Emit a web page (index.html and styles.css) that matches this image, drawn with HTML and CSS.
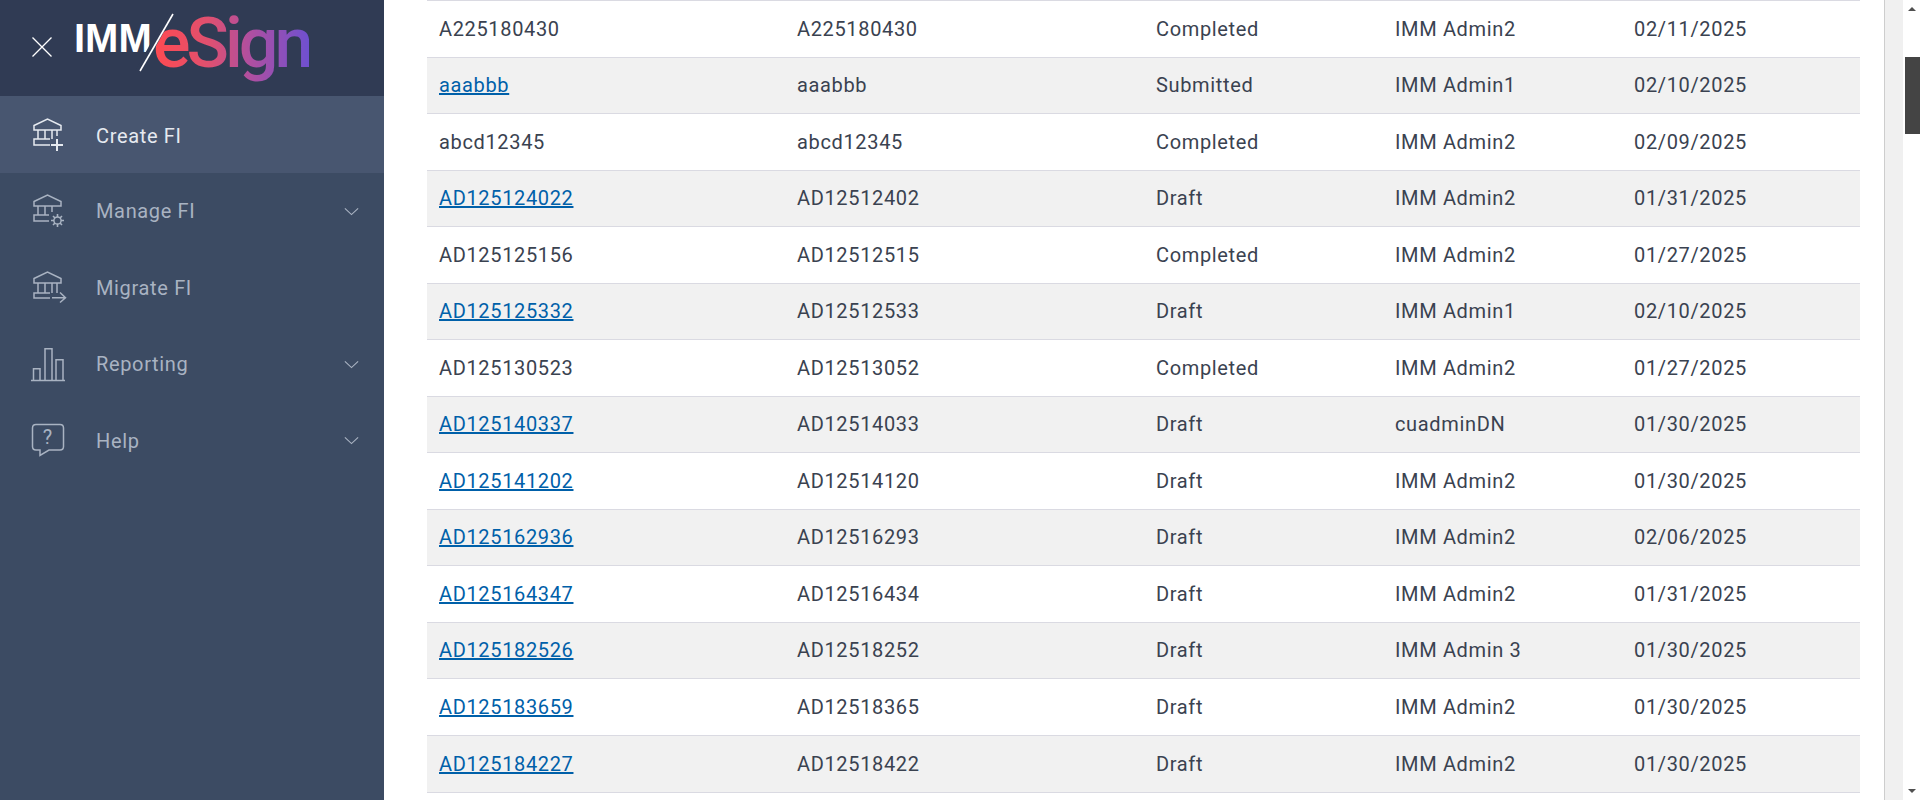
FILE: index.html
```html
<!DOCTYPE html>
<html lang="en">
<head>
<meta charset="utf-8">
<title>IMM eSign</title>
<link rel="stylesheet" href="styles.css">
</head>
<body>
<div class="app">
  <aside class="sidebar">
    <header class="brand">
      <svg class="close" width="20" height="20" viewBox="0 0 20 20"><path d="M.5.5 19.500 19.500M19.500.5 .5 19.500" fill="none" stroke="#fff" stroke-width="1.300"/></svg>
      <div class="logo">
        <span class="logo-imm">IMM</span><span class="logo-esign">eSign</span>
        <svg class="logo-slash" width="44" height="62" viewBox="0 0 44 62"><path d="M36 0 3 59" stroke="#303b54" stroke-width="6" fill="none"/><path d="M38 1 5 58" stroke="#fff" stroke-width="1.600" fill="none"/></svg>
      </div>
    </header>
    <nav class="nav">
      <a class="nav-item active">
        <svg class="nav-icon" width="36" height="38" viewBox="0 0 36 38"><g fill="none" stroke="currentColor" stroke-width="1.500"><path d="M4 9.500 17.500 3 31 9.500V14H4Z"/><path d="M8 14V23M15 14V23M22 14V23M27 14V20"/><path d="M20 23H4V29H20"/><path d="M21 29H33M27 23V35" stroke-width="2"/></g></svg>
        <span class="nav-label">Create FI</span>
      </a>
      <a class="nav-item">
        <svg class="nav-icon" width="36" height="38" viewBox="0 0 36 38"><g fill="none" stroke="currentColor" stroke-width="1.500"><path d="M4 9.500 17.500 3 31 9.500V14H4Z"/><path d="M8 14V23M15 14V23M22 14V20"/><path d="M19 23H4V29H19"/><circle cx="27.500" cy="28.500" r="3.600"/><path d="M27.500 22V25M27.500 32V35M21 28.500H24M31 28.500H34M23 24 25 26M30 31 32 33M32 24 30 26M25 31 23 33" stroke-width="1.600"/></g></svg>
        <span class="nav-label">Manage FI</span>
        <svg class="chev" width="15" height="9" viewBox="0 0 17 10"><path d="M1 1.500 8.500 8.500 16 1.500" fill="none" stroke="currentColor" stroke-width="1.300"/></svg>
      </a>
      <a class="nav-item">
        <svg class="nav-icon" width="36" height="38" viewBox="0 0 36 38"><g fill="none" stroke="currentColor" stroke-width="1.500"><path d="M4 9.500 17.500 3 31 9.500V14H4Z"/><path d="M8 14V24M15 14V24M22 14V24M27 14V24"/><path d="M20 24H4V29H20"/><path d="M22 28.700H35M30 23.500 35.500 28.700 30 33.500"/></g></svg>
        <span class="nav-label">Migrate FI</span>
      </a>
      <a class="nav-item">
        <svg class="nav-icon" width="36" height="38" viewBox="0 0 36 38"><path d="M1 35.500H35M3.500 35.500V23.700H10V35.500M15 35.500V3.700H22V35.500M26 35.500V14.700H33V35.500" fill="none" stroke="currentColor" stroke-width="1.500"/></svg>
        <span class="nav-label">Reporting</span>
        <svg class="chev" width="15" height="9" viewBox="0 0 17 10"><path d="M1 1.500 8.500 8.500 16 1.500" fill="none" stroke="currentColor" stroke-width="1.300"/></svg>
      </a>
      <a class="nav-item">
        <svg class="nav-icon" width="36" height="38" viewBox="0 0 36 38"><path d="M6 2.500H30Q33.500 2.500 33.500 6V24.500Q33.500 28 30 28H19L10 33.500V28H6Q2.500 28 2.500 24.500V6Q2.500 2.500 6 2.500Z" fill="none" stroke="currentColor" stroke-width="1.500"/><text class="help-q" x="17.500" y="22" text-anchor="middle">?</text></svg>
        <span class="nav-label">Help</span>
        <svg class="chev" width="15" height="9" viewBox="0 0 17 10"><path d="M1 1.500 8.500 8.500 16 1.500" fill="none" stroke="currentColor" stroke-width="1.300"/></svg>
      </a>
    </nav>
  </aside>
  <main class="main">
    <div class="table">
      <div class="row"><span>A225180430</span><span>A225180430</span><span>Completed</span><span>IMM Admin2</span><span>02/11/2025</span></div>
      <div class="row"><a href="#">aaabbb</a><span>aaabbb</span><span>Submitted</span><span>IMM Admin1</span><span>02/10/2025</span></div>
      <div class="row"><span>abcd12345</span><span>abcd12345</span><span>Completed</span><span>IMM Admin2</span><span>02/09/2025</span></div>
      <div class="row"><a href="#">AD125124022</a><span>AD12512402</span><span>Draft</span><span>IMM Admin2</span><span>01/31/2025</span></div>
      <div class="row"><span>AD125125156</span><span>AD12512515</span><span>Completed</span><span>IMM Admin2</span><span>01/27/2025</span></div>
      <div class="row"><a href="#">AD125125332</a><span>AD12512533</span><span>Draft</span><span>IMM Admin1</span><span>02/10/2025</span></div>
      <div class="row"><span>AD125130523</span><span>AD12513052</span><span>Completed</span><span>IMM Admin2</span><span>01/27/2025</span></div>
      <div class="row"><a href="#">AD125140337</a><span>AD12514033</span><span>Draft</span><span>cuadminDN</span><span>01/30/2025</span></div>
      <div class="row"><a href="#">AD125141202</a><span>AD12514120</span><span>Draft</span><span>IMM Admin2</span><span>01/30/2025</span></div>
      <div class="row"><a href="#">AD125162936</a><span>AD12516293</span><span>Draft</span><span>IMM Admin2</span><span>02/06/2025</span></div>
      <div class="row"><a href="#">AD125164347</a><span>AD12516434</span><span>Draft</span><span>IMM Admin2</span><span>01/31/2025</span></div>
      <div class="row"><a href="#">AD125182526</a><span>AD12518252</span><span>Draft</span><span>IMM Admin 3</span><span>01/30/2025</span></div>
      <div class="row"><a href="#">AD125183659</a><span>AD12518365</span><span>Draft</span><span>IMM Admin2</span><span>01/30/2025</span></div>
      <div class="row"><a href="#">AD125184227</a><span>AD12518422</span><span>Draft</span><span>IMM Admin2</span><span>01/30/2025</span></div>
    </div>
  </main>
  <div class="track"></div>
  <div class="scrollbar">
    <span class="arrow up"></span>
    <div class="thumb"></div>
    <span class="arrow down"></span>
  </div>
</div>
</body>
</html>
```
FILE: styles.css
```css
* { box-sizing: border-box; }
html, body { margin: 0; height: 100%; overflow: hidden; background: #fff; }
body { font-family: Roboto, "Liberation Sans", sans-serif; font-size: 20px; letter-spacing: .65px; color: #3a4250; }
.app { display: flex; height: 800px; }

.sidebar { width: 384px; flex: none; background: #3c4b63; }
.brand { height: 96px; background: #303b54; display: flex; align-items: center; padding-left: 32px; }
.close { flex: none; margin-right: 25px; margin-top: -2px; }
.logo { position: relative; display: flex; align-items: flex-start; align-self: flex-start; }
.logo-imm { font-family: "Liberation Sans", sans-serif; font-weight: 700; font-size: 40px; line-height: 1; letter-spacing: 0; color: #fff; width: 76px; margin-top: 18px; margin-left: -3px; margin-right: 3px; white-space: nowrap; }
.logo-esign { font-family: Roboto, sans-serif; font-weight: 500; font-size: 70px; line-height: 1.300; letter-spacing: -4px; margin-top: -2px; background: linear-gradient(90deg, #ff4a50 0%, #e0506f 35%, #b04fa0 62%, #6f50d0 100%); -webkit-background-clip: text; background-clip: text; color: transparent; }
.logo-slash { position: absolute; left: 58px; top: 13px; }

.nav { display: flex; flex-direction: column; padding-top: .6px; }
.nav-item { display: flex; align-items: center; height: 76.500px; padding-left: 30px; color: #a9b3c2; }
.nav-item.active { background: #485670; color: #e6eaf0; margin-top: -.6px; height: 77px; }
.nav-item.active .nav-label { padding-top: 2px; }
.nav-icon { flex: none; margin-right: 30px; overflow: visible; }
.nav-label { flex: 1; }
.chev { flex: none; margin-right: 25px; }
.help-q { font-family: Roboto, sans-serif; font-size: 20px; letter-spacing: 0; fill: currentColor; }

.main { flex: 1; min-width: 0; padding: 0 24px 0 43px; }
.row { display: grid; grid-template-columns: 358px 359px 239px 239px 1fr; align-items: center; height: 56.500px; padding-left: 12px; border-top: 1.500px solid #dadae2; }
.row:last-child { height: 58px; border-bottom: 1.500px solid #dadae2; }
.row:nth-child(even) { background: #f1f1f1; }
.row a { color: #0060a9; justify-self: start; }

.track { width: 19px; flex: none; background: #f0f0f0; border-left: 1.500px solid #cdcdcd; }
.scrollbar { width: 17px; flex: none; background: #fff; position: relative; }
.thumb { position: absolute; right: 0; top: 57px; width: 15px; height: 77px; background: #444; }
.arrow { position: absolute; left: 5px; width: 0; height: 0; border-left: 4px solid transparent; border-right: 4px solid transparent; }
.arrow.up { top: 7px; border-bottom: 4px solid #505050; }
.arrow.down { top: 789px; border-top: 4px solid #505050; }
```
